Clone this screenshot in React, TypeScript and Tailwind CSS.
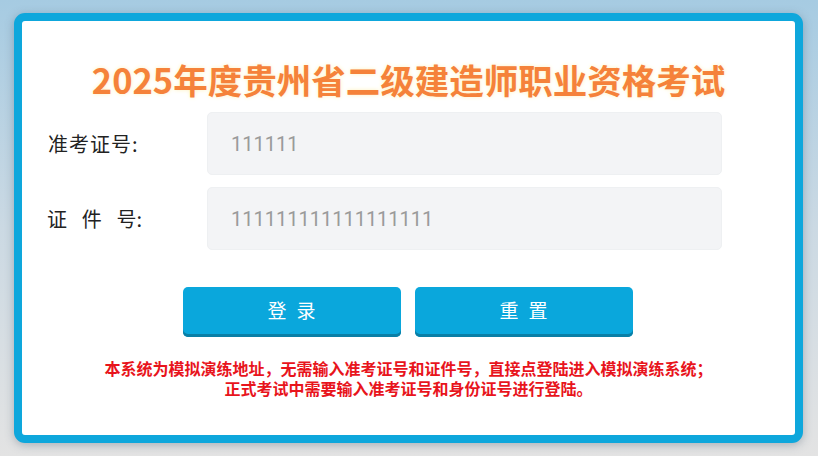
const font = "font-['Noto_Sans_CJK_SC','Noto_Sans',sans-serif]";

const Field = ({ label, value }: { label: React.ReactNode; value: string }) => (
  <div className="flex items-center">
    <div className="w-[185px] pl-[25px] text-[20px] leading-[24px] text-[#222]">{label}</div>
    <div className="flex h-[63px] w-[515px] items-center rounded-[5px] border border-[#eef0f2] bg-[#f3f4f6] pl-[23px] font-['Roboto','Noto_Sans',sans-serif] text-[20px] text-[#9a9a9a]">
      {value}
    </div>
  </div>
);

const SpreadLabel = ({ chars }: { chars: string[] }) => (
  <div className="flex w-[95px] justify-between">
    {chars.map((c, i) => (
      <span key={i}>{c}</span>
    ))}
  </div>
);

export default function App() {
  return (
    <div className={`h-[456px] w-[818px] overflow-hidden bg-gradient-to-b from-[#a6cbe2] via-[#cbd9e3] to-[#e3e3e3] pt-[13px] pl-[14px] ${font}`}>
      <div className="h-[430px] w-[789px] rounded-[11px] border-[8px] border-[#0ea7dc] bg-white shadow-[0_2px_10px_rgba(60,80,100,0.35)]">
        <h1 className="pt-[36px] text-center text-[34.5px] font-bold leading-[44px] text-[#f5823a] [text-shadow:0_0_4px_#fff2c0]">
          2025年度贵州省二级建造师职业资格考试
        </h1>

        <div className="mt-[11px] flex flex-col gap-[12px]">
          <Field label={<span className="pl-[1px] tracking-[1px]">准考证号:</span>} value="111111" />
          <Field label={<SpreadLabel chars={["证", "件", "号:"]} />} value="111111111111111111" />
        </div>

        <div className="mt-[37px] flex justify-center gap-[14px] pr-[2px]">
          <button className="h-[50px] w-[218px] rounded-[5px] bg-[#0aa7dc] pb-[3px] pl-[10px] text-[19px] tracking-[10px] text-white shadow-[inset_0_-3px_0_#0a7fa6]">
            登录
          </button>
          <button className="h-[50px] w-[218px] rounded-[5px] bg-[#0aa7dc] pb-[3px] pl-[10px] text-[19px] tracking-[10px] text-white shadow-[inset_0_-3px_0_#0a7fa6]">
            重置
          </button>
        </div>

        <div className="mt-[21px] text-center text-[16px] font-bold leading-[20px] text-[#e8141c]">
          <p>本系统为模拟演练地址，无需输入准考证号和证件号，直接点登陆进入模拟演练系统；</p>
          <p>正式考试中需要输入准考证号和身份证号进行登陆。</p>
        </div>
      </div>
    </div>
  );
}
